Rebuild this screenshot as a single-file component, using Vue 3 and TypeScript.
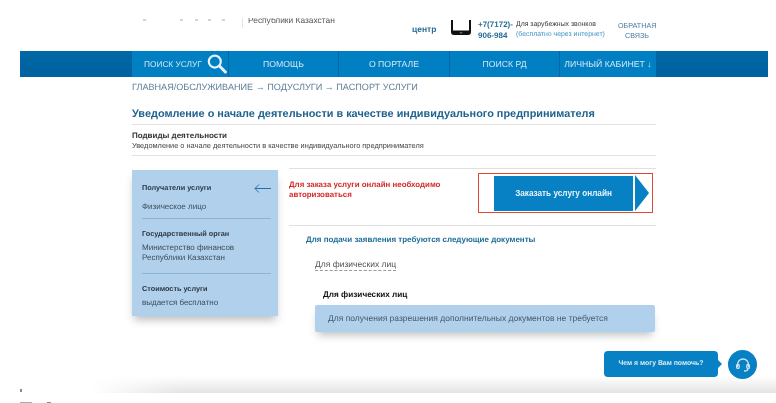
<script setup lang="ts">
// Service passport page: header strip, nav, service details and chat prompt.
const navItems = ['ПОМОЩЬ', 'О ПОРТАЛЕ', 'ПОИСК РД', 'ЛИЧНЫЙ КАБИНЕТ ↓'];
// Descenders of the logo text cut off by the top of the capture.
const logoMarks = [8, 34, 12, 10, 11];
</script>

<template>
  <div class="page">
    <header class="top">
      <div class="top-marks">
        <i v-for="(gap, idx) in logoMarks" :key="idx" :style="{ marginLeft: gap + 'px' }"></i>
      </div>
      <div class="top-left"><span>Республики Казахстан</span></div>
      <div class="top-center">центр</div>
      <svg class="phone" width="20" height="15" viewBox="0 0 20 15">
        <path d="M0 0h2v10.5h16V0h2v12c0 2-1 3-3 3H3c-2 0-3-1-3-3z" fill="#111" />
        <rect x="8.5" y="12" width="3" height="1.6" rx=".8" fill="#666" />
      </svg>
      <div class="top-phone">+7(7172)-<br />906-984</div>
      <div class="top-note">
        Для зарубежных звонков
        <span>(бесплатно через интернет)</span>
      </div>
      <div class="top-back">ОБРАТНАЯ<br />СВЯЗЬ</div>
    </header>

    <nav class="nav">
      <div class="nav-inner">
        <div class="nav-cell nav-cell--search">
          ПОИСК УСЛУГ
          <svg width="20" height="20" viewBox="0 0 20 20" fill="none" stroke="#e6f2fa">
            <circle cx="7.8" cy="7.6" r="6" stroke-width="2.2" />
            <path d="M12.4 12l6 6" stroke-width="3" stroke-linecap="round" />
          </svg>
        </div>
        <div v-for="item in navItems" :key="item" class="nav-cell">{{ item }}</div>
      </div>
    </nav>

    <main class="content">
      <div class="crumbs">ГЛАВНАЯ/ОБСЛУЖИВАНИЕ → ПОДУСЛУГИ → ПАСПОРТ УСЛУГИ</div>
      <h1 class="title">Уведомление о начале деятельности в качестве индивидуального предпринимателя</h1>
      <div class="kinds">
        <b>Подвиды деятельности</b>
        <p>Уведомление о начале деятельности в качестве индивидуального предпринимателя</p>
      </div>

      <div class="columns">
        <aside class="side">
          <section class="side-block side-block--first">
            <div class="side-head">
              <b>Получатели услуги</b>
              <svg width="17" height="9" viewBox="0 0 17 9" fill="none" stroke="#2b6ea6" stroke-width="1">
                <path d="M17 4.5H1M5 .5l-4 4 4 4" />
              </svg>
            </div>
            <p>Физическое лицо</p>
          </section>
          <section class="side-block side-block--second">
            <b>Государственный орган</b>
            <p>Министерство финансов<br />Республики Казахстан</p>
          </section>
          <section class="side-block side-block--last">
            <b>Стоимость услуги</b>
            <p>выдается бесплатно</p>
          </section>
        </aside>

        <div class="main">
          <div class="order">
            <div class="order-note">Для заказа услуги онлайн необходимо авторизоваться</div>
            <div class="order-frame">
              <button type="button" class="order-btn">Заказать услугу онлайн</button>
              <span class="order-arrow"></span>
            </div>
          </div>
          <h2 class="docs-title">Для подачи заявления требуются следующие документы</h2>
          <div class="docs-tab"><span>Для физических лиц</span></div>
          <div class="docs-head">Для физических лиц</div>
          <div class="docs-box">Для получения разрешения дополнительных документов не требуется</div>
        </div>
      </div>
    </main>

    <div class="bottom-fade"></div>
    <i class="edge-mark edge-mark--tick"></i>
    <i class="edge-mark edge-mark--a"></i>
    <i class="edge-mark edge-mark--b"></i>

    <div class="chat">
      <div class="chat-bubble">Чем я могу Вам помочь?</div>
      <div class="chat-icon">
        <svg width="16" height="16" viewBox="0 0 16 16" fill="none" stroke="#cfe6f5" stroke-width="1.3">
          <path d="M2.6 10V7.4a5.4 5.4 0 0 1 10.8 0V10" />
          <rect x="1.6" y="7.4" width="2.6" height="4" rx="1.2" />
          <rect x="11.8" y="7.4" width="2.6" height="4" rx="1.2" />
          <path d="M13 11.4c0 1.6-1.4 2.6-4 2.6" />
        </svg>
      </div>
    </div>
  </div>
</template>

<style>
html,
body {
  margin: 0;
  background: #fff;
}
</style>

<style scoped>
.page {
  position: relative;
  width: 776px;
  height: 403px;
  overflow: hidden;
  font-family: 'Liberation Sans', Arial, sans-serif;
  text-rendering: geometricPrecision;
  color: #333;
  background: #fff;
  filter: blur(0.35px);
}

.top {
  display: flex;
  align-items: flex-start;
  height: 51px;
  padding-left: 135px;
  box-sizing: border-box;
}

.top-marks {
  display: flex;
  width: 107px;
  height: 10px;
  padding-top: 19px;
}

.top-marks i {
  display: block;
  width: 3px;
  height: 2px;
  background: #d4d4d4;
}

.top-left {
  width: 170px;
  height: 10px;
  margin-top: 18px;
  padding-left: 5px;
  border-left: 1px solid #e6e6e6;
  box-sizing: border-box;
  overflow: hidden;
  font-size: 8.4px;
  line-height: 5px;
  color: #555;
  white-space: nowrap;
}

.top-center {
  width: 39px;
  margin-top: 24px;
  font-size: 8.5px;
  line-height: 11px;
  font-weight: 700;
  color: #2a6d96;
}

.phone {
  margin-top: 20px;
  flex: none;
}

.top-phone {
  width: 38px;
  margin: 19px 0 0 7px;
  font-size: 8px;
  line-height: 11px;
  font-weight: 700;
  color: #2a6d96;
  white-space: nowrap;
}

.top-note {
  width: 102px;
  margin-top: 20px;
  font-size: 6.9px;
  line-height: 10px;
  color: #333;
  white-space: nowrap;
}

.top-note span {
  display: block;
  color: #3c93c4;
}

.top-back {
  width: 38px;
  margin-top: 21px;
  font-size: 7.2px;
  line-height: 10px;
  text-align: center;
  color: #46789c;
  white-space: nowrap;
}

.nav {
  margin-left: 20px;
  width: 748px;
  height: 26px;
  padding-left: 112px;
  box-sizing: border-box;
  background: linear-gradient(#0069a5, #0060a0);
}

.nav-inner {
  display: grid;
  grid-template-columns: 97px 110px 111px 110px 96px;
  width: 524px;
  height: 26px;
}

.nav-cell {
  display: flex;
  align-items: center;
  justify-content: center;
  gap: 5px;
  font-size: 8.7px;
  color: #cfe5f3;
  background: #0080c3;
  border-right: 1px solid #0068a8;
  white-space: nowrap;
}

.nav-cell:last-child {
  border-right: 0;
}

.nav-cell--search {
  justify-content: flex-start;
  padding-left: 12px;
  box-sizing: border-box;
  font-size: 8.3px;
}

.content {
  margin-left: 132px;
  width: 524px;
}

.crumbs {
  margin-top: 5px;
  font-size: 9.1px;
  line-height: 11px;
  color: #5d7f95;
}

.title {
  margin: 14px 0 0;
  font-size: 10.9px;
  line-height: 14px;
  font-weight: 700;
  color: #1e628f;
  white-space: nowrap;
  padding-bottom: 3px;
  border-bottom: 1px solid #e3e3e3;
}

.kinds {
  padding: 6px 0 5px;
  border-bottom: 1px solid #e3e3e3;
}

.kinds b {
  display: block;
  font-size: 8px;
  line-height: 10px;
  color: #333;
}

.kinds p {
  margin: 0;
  font-size: 7.4px;
  line-height: 9px;
  color: #444;
}

.columns {
  display: flex;
  margin-top: 12px;
}

.side {
  flex: 0 0 146px;
  height: 146px;
  margin-top: 2px;
  box-sizing: border-box;
  padding: 0 7px 0 10px;
  background: #b0d0ec;
  box-shadow: 0 6px 8px -2px rgba(60, 70, 80, 0.35);
  font-size: 8px;
  color: #3c4d5c;
}

.side b {
  display: block;
  color: #2b3640;
  font-size: 7.3px;
  line-height: 10px;
}

.side p {
  margin: 0;
  line-height: 10px;
}

.side-head {
  display: flex;
  align-items: center;
  justify-content: space-between;
}

.side-block--first {
  height: 49px;
  padding-top: 13px;
  box-sizing: border-box;
  border-bottom: 1px solid #8fb2cf;
}

.side-block--first p {
  margin-top: 9px;
}

.side-block--second {
  height: 55px;
  padding-top: 10px;
  box-sizing: border-box;
  border-bottom: 1px solid #8fb2cf;
}

.side-block--second p {
  margin-top: 4px;
}

.side-block--last {
  padding-top: 10px;
}

.side-block--last p {
  margin-top: 4px;
}

.main {
  margin-left: 11px;
  flex: 1;
  min-width: 0;
}

.order {
  display: flex;
  height: 56px;
  border-top: 1px solid #e0e0e0;
  border-bottom: 1px solid #e0e0e0;
}

.order-note {
  width: 170px;
  padding-top: 11px;
  font-size: 7.9px;
  line-height: 10px;
  font-weight: 700;
  color: #d42b2b;
}

.order-frame {
  display: flex;
  align-items: center;
  gap: 2px;
  box-sizing: border-box;
  width: 175px;
  height: 40px;
  margin: 4px 0 0 19px;
  padding-left: 15px;
  border: 1.5px solid #e04a35;
}

.order-btn {
  width: 139px;
  height: 35px;
  padding: 0;
  border: 0;
  background: #0880c4;
  color: #e8f3fa;
  font: 700 8.2px 'Liberation Sans', Arial, sans-serif;
}

.order-arrow {
  width: 0;
  height: 0;
  border-top: 18px solid transparent;
  border-bottom: 18px solid transparent;
  border-left: 14px solid #0880c4;
}

.docs-title {
  margin: 8px 0 0 17px;
  font-size: 8px;
  line-height: 11px;
  font-weight: 700;
  color: #1f6f99;
}

.docs-tab {
  margin: 14px 0 0 26px;
  font-size: 8.5px;
  line-height: 11px;
  color: #555;
}

.docs-tab span {
  display: inline-block;
  border-bottom: 1px dashed #999;
}

.docs-head {
  margin: 18px 0 0 34px;
  font-size: 8.2px;
  line-height: 11px;
  font-weight: 700;
  color: #111;
}

.docs-box {
  margin: 5px 0 0 26px;
  width: 340px;
  height: 27px;
  box-sizing: border-box;
  padding-left: 13px;
  line-height: 27px;
  font-size: 8.5px;
  color: #47596a;
  background: #b0d0ec;
  border-radius: 2px;
  box-shadow: 0 6px 8px -3px rgba(60, 70, 80, 0.35);
}

.bottom-fade {
  position: absolute;
  left: 90px;
  right: 0;
  top: 376px;
  height: 17px;
  background: linear-gradient(rgba(228, 228, 228, 0), #e4e4e4);
  -webkit-mask-image: linear-gradient(90deg, transparent, #000 90px);
  mask-image: linear-gradient(90deg, transparent, #000 90px);
}

.edge-mark {
  position: absolute;
  display: block;
  background: #8a8a8a;
}

.edge-mark--tick {
  left: 20px;
  top: 389px;
  width: 2px;
  height: 3px;
}

.edge-mark--a {
  left: 20px;
  top: 402px;
  width: 12px;
  height: 1px;
  background: #aaa;
}

.edge-mark--b {
  left: 47px;
  top: 402px;
  width: 4px;
  height: 1px;
}

.chat {
  position: absolute;
  left: 604px;
  top: 350px;
  display: flex;
  align-items: flex-start;
  gap: 10px;
}

.chat-bubble {
  position: relative;
  width: 114px;
  height: 26px;
  margin-top: 1px;
  line-height: 26px;
  text-align: center;
  font-size: 6.9px;
  font-weight: 700;
  color: #d8ecf8;
  background: #0880c4;
  border-radius: 4px;
}

.chat-bubble::after {
  content: '';
  position: absolute;
  right: -4px;
  top: 9px;
  border-top: 4px solid transparent;
  border-bottom: 4px solid transparent;
  border-left: 4px solid #0880c4;
}

.chat-icon {
  display: flex;
  align-items: center;
  justify-content: center;
  width: 29px;
  height: 29px;
  border-radius: 50%;
  background: #0880c4;
}
</style>
